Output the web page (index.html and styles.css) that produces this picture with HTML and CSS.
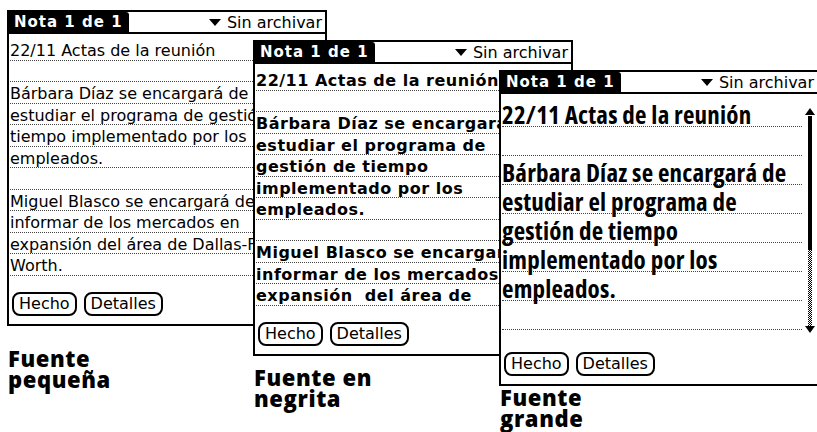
FILE: index.html
```html
<!DOCTYPE html>
<html lang="es">
<head>
    <meta charset="UTF-8">
    <meta name="viewport" content="width=device-width, initial-scale=1.0">
    <title>Fuentes de Nota</title>
    <link rel="stylesheet" href="styles.css">
</head>
<body>
    <div class="panel panel-small">
        <div class="screen">
            <div class="title">
                <span class="tab">Nota 1 de 1</span>
                <span class="category"><svg width="12" height="7" viewBox="0 0 12 7"><polygon points="0,0 12,0 6,7"/></svg>Sin archivar</span>
            </div>
            <div class="note">
                <div class="lines">
                    <div class="line">22/11 Actas de la reunión</div>
                    <div class="line">&nbsp;</div>
                    <div class="line">Bárbara Díaz se encargará de</div>
                    <div class="line">estudiar el programa de gestión de</div>
                    <div class="line">tiempo implementado por los</div>
                    <div class="line">empleados.</div>
                    <div class="line">&nbsp;</div>
                    <div class="line">Miguel Blasco se encargará de</div>
                    <div class="line">informar de los mercados en</div>
                    <div class="line">expansión del área de Dallas-Fort</div>
                    <div class="line">Worth.</div>
                </div>
            </div>
            <div class="buttons">
                <span class="btn">Hecho</span>
                <span class="btn">Detalles</span>
            </div>
        </div>
        <div class="caption">Fuente<br>pequeña</div>
    </div>

    <div class="panel panel-bold">
        <div class="screen">
            <div class="title">
                <span class="tab">Nota 1 de 1</span>
                <span class="category"><svg width="12" height="7" viewBox="0 0 12 7"><polygon points="0,0 12,0 6,7"/></svg>Sin archivar</span>
            </div>
            <div class="note">
                <div class="lines">
                    <div class="line">22/11 Actas de la reunión</div>
                    <div class="line">&nbsp;</div>
                    <div class="line">Bárbara Díaz se encargará de</div>
                    <div class="line">estudiar el programa de</div>
                    <div class="line">gestión de tiempo</div>
                    <div class="line">implementado por los</div>
                    <div class="line">empleados.</div>
                    <div class="line">&nbsp;</div>
                    <div class="line">Miguel Blasco se encargará de</div>
                    <div class="line">informar de los mercados en</div>
                    <div class="line">expansión &nbsp;del área de</div>
                </div>
            </div>
            <div class="buttons">
                <span class="btn">Hecho</span>
                <span class="btn">Detalles</span>
            </div>
        </div>
        <div class="caption">Fuente en<br>negrita</div>
    </div>

    <div class="panel panel-large">
        <div class="screen">
            <div class="title">
                <span class="tab">Nota 1 de 1</span>
                <span class="category"><svg width="12" height="7" viewBox="0 0 12 7"><polygon points="0,0 12,0 6,7"/></svg>Sin archivar</span>
            </div>
            <div class="note">
                <div class="lines">
                    <div class="line">22/11 Actas de la reunión</div>
                    <div class="line">&nbsp;</div>
                    <div class="line">Bárbara Díaz se encargará de</div>
                    <div class="line">estudiar el programa de</div>
                    <div class="line">gestión de tiempo</div>
                    <div class="line">implementado por los</div>
                    <div class="line">empleados.</div>
                    <div class="line">&nbsp;</div>
                </div>
                <div class="scrollbar">
                    <svg width="10" height="7" viewBox="0 0 10 7"><polygon points="5,0 10,7 0,7"/></svg>
                    <div class="thumb"></div>
                    <div class="track"></div>
                    <svg width="10" height="7" viewBox="0 0 10 7"><polygon points="0,0 10,0 5,7"/></svg>
                </div>
            </div>
            <div class="buttons">
                <span class="btn">Hecho</span>
                <span class="btn">Detalles</span>
            </div>
        </div>
        <div class="caption">Fuente<br>grande</div>
    </div>
</body>
</html>
```

FILE: styles.css
```css
body {
    margin: 0;
    width: 817px;
    height: 432px;
    overflow: hidden;
    position: relative;
    background: #fff;
    color: #000;
    font-family: "DejaVu Sans", sans-serif;
}

/* the three screens sit on a free canvas, each one over the previous */
.panel {
    position: absolute;
    display: flex;
    flex-direction: column;
}
.panel-small {
    left: 7px;
    top: 10px;
}
.panel-bold {
    left: 253px;
    top: 40px;
}
.panel-large {
    left: 499px;
    top: 70px;
}

.screen {
    width: 320px;
    height: 316px;
    box-sizing: border-box;
    border: 2px solid #000;
    background: #fff;
    display: flex;
    flex-direction: column;
}

.title {
    height: 22px;
    box-sizing: border-box;
    border-bottom: 2px solid #000;
    display: flex;
}
.tab {
    background: #000;
    color: #fff;
    font-weight: bold;
    font-size: 15px;
    letter-spacing: 1px;
    padding: 0 6px 0 5px;
    display: flex;
    align-items: center;
    border-radius: 0 3px 0 0;
}
.category {
    margin-left: auto;
    display: flex;
    align-items: center;
    gap: 6px;
    font-size: 16px;
    padding-right: 3px;
}

.note {
    flex: 1;
    display: flex;
    padding: 5px 0 0 1px;
}
.lines {
    flex: 1;
    min-width: 0;
}
.line {
    height: 21.5px;
    box-sizing: border-box;
    border-bottom: 1px dotted #444;
    white-space: nowrap;
    overflow: hidden;
    font-size: 16px;
    line-height: 16px;
    padding-top: 4px;
}

.panel-bold .line {
    font-weight: bold;
    letter-spacing: 0.5px;
}

.panel-large .note {
    padding-top: 4px;
}
.panel-large .line {
    height: 29px;
    overflow: visible;
    font-family: "Open Sans", sans-serif;
    font-stretch: 75%;
    font-weight: 700;
    font-size: 25px;
    letter-spacing: 0.2px;
    line-height: 24px;
    padding-top: 4px;
}

.scrollbar {
    width: 10px;
    margin: 10px 2px 0 3px;
    display: flex;
    flex-direction: column;
    align-items: center;
}
.thumb {
    width: 4px;
    height: 134px;
    margin-top: 1px;
    background: #000;
}
.track {
    width: 4px;
    height: 76px;
    background: repeating-conic-gradient(#000 0 25%, #fff 0 50%) 0 0 / 2px 2px;
}

.buttons {
    display: flex;
    gap: 7px;
    padding: 0 0 8px 3px;
}
.btn {
    height: 24px;
    box-sizing: border-box;
    border: 2px solid #000;
    border-radius: 8px;
    padding: 0 5px;
    font-size: 16px;
    line-height: 20px;
}

.caption {
    font-family: "Open Sans", sans-serif;
    font-weight: 800;
    font-size: 22px;
    letter-spacing: 0.6px;
    line-height: 21px;
    padding-left: 1px;
}
.panel-small .caption {
    margin-top: 22px;
}
.panel-bold .caption {
    margin-top: 11px;
}
.panel-large .caption {
    margin-top: 1px;
}
```
